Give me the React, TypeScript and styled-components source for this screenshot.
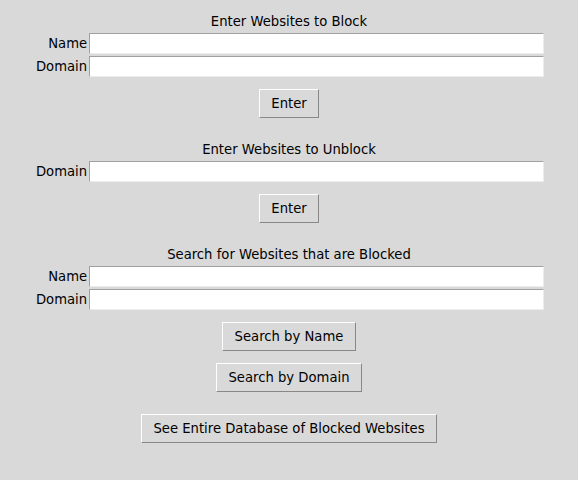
import React from "react";
import styled, { createGlobalStyle } from "styled-components";

const Global = createGlobalStyle`
  html, body {
    margin: 0;
    padding: 0;
    background: #d9d9d9;
  }
  body {
    font-family: "DejaVu Sans", "Liberation Sans", sans-serif;
    font-size: 13.2px;
    color: #000;
  }
`;

const Window = styled.div`
  width: 578px;
  height: 480px;
  box-sizing: border-box;
  padding-top: 12px;
  display: flex;
  flex-direction: column;
  align-items: center;
  gap: 22px;
  background: #d9d9d9;
`;

const Section = styled.section`
  display: flex;
  flex-direction: column;
  align-items: center;
`;

const Title = styled.div`
  height: 19px;
  line-height: 19px;
  text-align: center;
  margin-bottom: 2px;
`;

const Form = styled.div`
  display: grid;
  grid-template-columns: auto 455px;
  row-gap: 2px;
  align-items: center;
  margin-bottom: 12px;
`;

const Label = styled.label`
  text-align: right;
  padding: 0 2px;
  line-height: 21px;
  white-space: nowrap;
`;

const Entry = styled.input`
  box-sizing: border-box;
  width: 455px;
  height: 21px;
  margin: 0;
  padding: 0 2px;
  background: #ffffff;
  border: 1px solid;
  border-color: #a0a0a0 #ececec #ececec #a0a0a0;
  font: inherit;
  outline: none;
`;

const Buttons = styled.div`
  display: flex;
  flex-direction: column;
  align-items: center;
  gap: 12px;
`;

const Button = styled.button`
  box-sizing: border-box;
  height: 29px;
  padding: 0 11.5px;
  background: #d9d9d9;
  border: 1px solid;
  border-color: #ffffff #888888 #888888 #ffffff;
  font: inherit;
  color: #000;
  cursor: pointer;
  white-space: nowrap;
`;

export default function App() {
  return (
    <>
      <Global />
      <Window>
        <Section>
          <Title>Enter Websites to Block</Title>
          <Form>
            <Label>Name</Label>
            <Entry />
            <Label>Domain</Label>
            <Entry />
          </Form>
          <Button>Enter</Button>
        </Section>
        <Section>
          <Title>Enter Websites to Unblock</Title>
          <Form>
            <Label>Domain</Label>
            <Entry />
          </Form>
          <Button>Enter</Button>
        </Section>
        <Section>
          <Title>Search for Websites that are Blocked</Title>
          <Form>
            <Label>Name</Label>
            <Entry />
            <Label>Domain</Label>
            <Entry />
          </Form>
          <Buttons>
            <Button>Search by Name</Button>
            <Button>Search by Domain</Button>
          </Buttons>
        </Section>
        <Button>See Entire Database of Blocked Websites</Button>
      </Window>
    </>
  );
}
